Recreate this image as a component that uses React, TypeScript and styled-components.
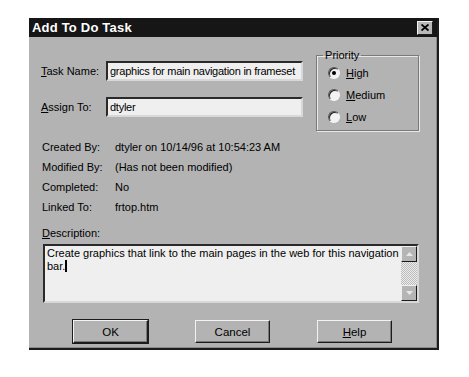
import React from 'react';
import styled, { createGlobalStyle } from 'styled-components';

const GlobalStyle = createGlobalStyle`
  body {
    margin: 0;
    background: #ffffff;
    font-family: "Liberation Sans", Arial, sans-serif;
    font-size: 11px;
    color: #000;
  }
`;

const Dialog = styled.div`
  margin: 18px 0 0 29px;
  width: 410px;
  height: 332px;
  box-sizing: border-box;
  background: #b3b3b3;
  border-right: 2px solid #1c1c1c;
  border-bottom: 2px solid #1c1c1c;
  box-shadow: inset -1px -1px 0 #8a8a8a;
  display: flex;
  flex-direction: column;
`;

const TitleBar = styled.div`
  height: 19px;
  background: #161616;
  color: #fff;
  font-weight: bold;
  font-size: 13px;
  letter-spacing: 0.2px;
  display: flex;
  align-items: center;
  justify-content: space-between;
  padding: 0 4px 0 3px;
`;

const CloseButton = styled.div`
  width: 14px;
  height: 12px;
  background: #b8b8b8;
  border: 1px solid;
  border-color: #f4f4f4 #1c1c1c #1c1c1c #f4f4f4;
  display: flex;
  align-items: center;
  justify-content: center;
`;

const TopSection = styled.div`
  display: flex;
  align-items: flex-start;
  padding: 12px 18px 0 12px;
`;

const Fields = styled.div`
  display: flex;
  flex-direction: column;
  gap: 16px;
  padding-top: 12px;
  width: 274px;
`;

const FieldRow = styled.div`
  display: grid;
  grid-template-columns: 65px 197px;
  align-items: center;
`;

const Mnemonic = styled.span`
  text-decoration: underline;
`;

const TextBox = styled.div`
  height: 20px;
  box-sizing: border-box;
  background: #efefef;
  border: 2px solid;
  border-color: #2a2a2a #d8d8d8 #d8d8d8 #2a2a2a;
  padding: 0 2px;
  display: flex;
  align-items: center;
  white-space: nowrap;
  overflow: hidden;
  font-size: 11px;
  letter-spacing: -0.25px;
`;

const GroupBox = styled.fieldset`
  margin: 0 0 0 10px;
  width: 106px;
  height: 82px;
  box-sizing: border-box;
  border: 1px solid #7a7a7a;
  box-shadow: inset 1px 1px 0 #e8e8e8, 1px 1px 0 #e8e8e8;
  padding: 4px 0 0 11px;
`;

const Legend = styled.legend`
  padding: 0 2px;
  margin: 0 0 0 -5px;
  line-height: 13px;
`;

const RadioList = styled.div`
  display: flex;
  flex-direction: column;
  gap: 8px;
`;

const RadioRow = styled.div`
  display: flex;
  align-items: center;
  gap: 6px;
  height: 14px;
`;

const RadioCircle = styled.span<{ $checked?: boolean }>`
  width: 12px;
  height: 12px;
  box-sizing: border-box;
  border-radius: 50%;
  border: 1px solid;
  border-color: #555 #f4f4f4 #f4f4f4 #555;
  background: #f2f2f2;
  box-shadow: inset 1px 1px 0 #222;
  display: flex;
  align-items: center;
  justify-content: center;
  &::after {
    content: '';
    display: ${p => (p.$checked ? 'block' : 'none')};
    width: 4px;
    height: 4px;
    border-radius: 50%;
    background: #000;
  }
`;

const InfoGrid = styled.div`
  display: grid;
  grid-template-columns: 73px auto;
  grid-auto-rows: 20px;
  align-items: center;
  padding: 6px 0 0 13px;
`;

const DescLabel = styled.div`
  padding: 9px 0 0 13px;
  line-height: 14px;
`;

const TextArea = styled.div`
  margin: 4px 0 0 14px;
  width: 376px;
  height: 59px;
  box-sizing: border-box;
  background: #efefef;
  border: 2px solid;
  border-color: #2a2a2a #d8d8d8 #d8d8d8 #2a2a2a;
  display: flex;
`;

const AreaText = styled.div`
  flex: 1;
  padding: 1px 2px;
  line-height: 12.5px;
`;

const Caret = styled.span`
  display: inline-block;
  width: 2px;
  height: 12px;
  background: #000;
  vertical-align: -2px;
`;

const ScrollBar = styled.div`
  width: 16px;
  display: flex;
  flex-direction: column;
  background-color: #d6d6d6;
  background-image: repeating-conic-gradient(#bcbcbc 0 25%, #ececec 0 50%);
  background-size: 2px 2px;
`;

const ScrollTrack = styled.div`
  flex: 1;
`;

const ArrowButton = styled.div`
  height: 16px;
  box-sizing: border-box;
  background: #b5b5b5;
  border: 1px solid;
  border-color: #f0f0f0 #1c1c1c #1c1c1c #f0f0f0;
  display: flex;
  align-items: center;
  justify-content: center;
`;

const ButtonRow = styled.div`
  display: flex;
  gap: 47px;
  padding: 17px 0 0 44px;
`;

const Button = styled.div<{ $default?: boolean }>`
  width: 75px;
  height: 23px;
  box-sizing: border-box;
  background: #b3b3b3;
  border: 1px solid;
  border-color: #f2f2f2 #1c1c1c #1c1c1c #f2f2f2;
  box-shadow: ${p =>
    p.$default ? '0 0 0 1px #1c1c1c, inset -1px -1px 0 #7a7a7a' : 'inset -1px -1px 0 #7a7a7a'};
  display: flex;
  align-items: center;
  justify-content: center;
  font-size: 11.5px;
`;

const Arrow = ({ up }: { up?: boolean }) => (
  <svg width="7" height="4" viewBox="0 0 7 4">
    <polygon points={up ? '3.5,0 7,4 0,4' : '0,0 7,0 3.5,4'} fill="#e8e8e8" />
  </svg>
);

export default function App() {
  return (
    <>
      <GlobalStyle />
      <Dialog>
        <TitleBar>
          <span>Add To Do Task</span>
          <CloseButton>
            <svg width="8" height="7" viewBox="0 0 8 7">
              <path d="M0.5 0.5 L7.5 6.5 M7.5 0.5 L0.5 6.5" stroke="#000" strokeWidth="1.8" />
            </svg>
          </CloseButton>
        </TitleBar>
        <TopSection>
          <Fields>
            <FieldRow>
              <span><Mnemonic>T</Mnemonic>ask Name:</span>
              <TextBox>graphics for main navigation in frameset</TextBox>
            </FieldRow>
            <FieldRow>
              <span><Mnemonic>A</Mnemonic>ssign To:</span>
              <TextBox>dtyler</TextBox>
            </FieldRow>
          </Fields>
          <GroupBox>
            <Legend>Priority</Legend>
            <RadioList>
              <RadioRow>
                <RadioCircle $checked />
                <span><Mnemonic>H</Mnemonic>igh</span>
              </RadioRow>
              <RadioRow>
                <RadioCircle />
                <span><Mnemonic>M</Mnemonic>edium</span>
              </RadioRow>
              <RadioRow>
                <RadioCircle />
                <span><Mnemonic>L</Mnemonic>ow</span>
              </RadioRow>
            </RadioList>
          </GroupBox>
        </TopSection>
        <InfoGrid>
          <span>Created By:</span>
          <span>dtyler on 10/14/96 at 10:54:23 AM</span>
          <span>Modified By:</span>
          <span>(Has not been modified)</span>
          <span>Completed:</span>
          <span>No</span>
          <span>Linked To:</span>
          <span>frtop.htm</span>
        </InfoGrid>
        <DescLabel><Mnemonic>D</Mnemonic>escription:</DescLabel>
        <TextArea>
          <AreaText>
            Create graphics that link to the main pages in the web for this navigation bar.<Caret />
          </AreaText>
          <ScrollBar>
            <ArrowButton><Arrow up /></ArrowButton>
            <ScrollTrack />
            <ArrowButton><Arrow /></ArrowButton>
          </ScrollBar>
        </TextArea>
        <ButtonRow>
          <Button $default>OK</Button>
          <Button>Cancel</Button>
          <Button><span><Mnemonic>H</Mnemonic>elp</span></Button>
        </ButtonRow>
      </Dialog>
    </>
  );
}
